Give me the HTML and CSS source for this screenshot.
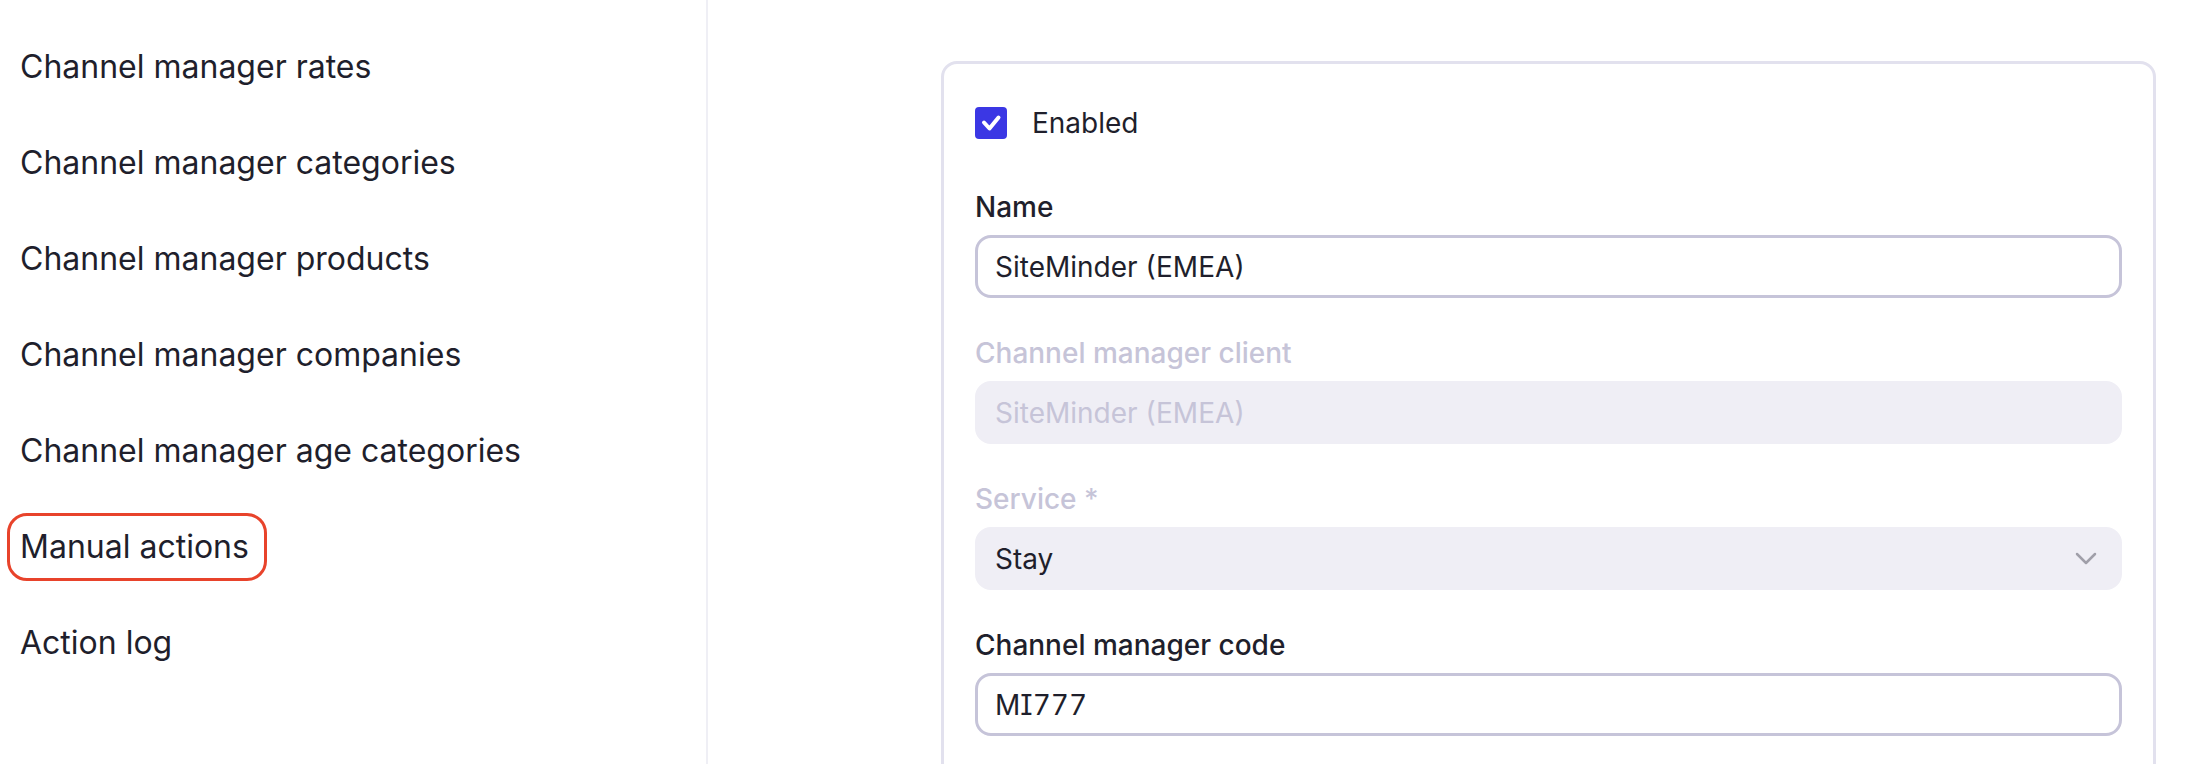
FILE: index.html
```html
<!DOCTYPE html>
<html lang="en">
<head>
    <meta charset="UTF-8">
    <meta name="viewport" content="width=device-width, initial-scale=1.0">
    <title>Channel manager</title>
    <link rel="stylesheet" href="styles.css">
</head>
<body>
    <nav class="sidebar">
        <a class="nav-item" href="#">Channel manager rates</a>
        <a class="nav-item" href="#">Channel manager categories</a>
        <a class="nav-item" href="#">Channel manager products</a>
        <a class="nav-item" href="#">Channel manager companies</a>
        <a class="nav-item" href="#">Channel manager age categories</a>
        <a class="nav-item selected" href="#">Manual actions</a>
        <a class="nav-item" href="#">Action log</a>
    </nav>
    <main class="main">
        <form class="card">
            <label class="check-row">
                <span class="checkbox">
                    <svg width="32" height="32" viewBox="0 0 32 32">
                        <path d="M9 15.5 L14.5 21.5 L23.5 10.5" fill="none" stroke="#fff" stroke-width="4" stroke-linecap="round" stroke-linejoin="round"/>
                    </svg>
                </span>
                Enabled
            </label>
            <div class="field">
                <div class="field-label">Name</div>
                <div class="input">SiteMinder (EMEA)</div>
            </div>
            <div class="field disabled">
                <div class="field-label">Channel manager client</div>
                <div class="input">SiteMinder (EMEA)</div>
            </div>
            <div class="field select">
                <div class="field-label">Service *</div>
                <div class="input">
                    Stay
                    <svg class="chevron" width="22" height="13" viewBox="0 0 22 13">
                        <path d="M2 2 L11 11 L20 2" fill="none" stroke="#a09fa9" stroke-width="2.5" stroke-linecap="round" stroke-linejoin="round"/>
                    </svg>
                </div>
            </div>
            <div class="field">
                <div class="field-label">Channel manager code</div>
                <div class="input">MI777</div>
            </div>
        </form>
    </main>
</body>
</html>
```

FILE: styles.css
```css
* {
    box-sizing: border-box;
}
body {
    margin: 0;
    height: 100vh;
    overflow: hidden;
    display: flex;
    background-color: #fff;
    color: #1f1f2c;
    font-family: Inter, "Noto Sans", sans-serif;
}
.sidebar {
    width: 708px;
    flex-shrink: 0;
    border-right: 2px solid #efeff5;
    padding: 33px 0 0 7px;
    display: flex;
    flex-direction: column;
    align-items: flex-start;
}
.nav-item {
    color: #1f1f2c;
    text-decoration: none;
    font-size: 32px;
    line-height: 48px;
    padding: 7px 15px 7px 10px;
    border: 3px solid transparent;
    border-radius: 20px;
    margin-bottom: 28px;
}
.nav-item.selected {
    border-color: #e8432b;
}
.main {
    flex-grow: 1;
    padding: 61px 34px 0 233px;
}
.card {
    border: 3px solid #e2e1ee;
    border-radius: 16px;
    padding: 35px 31px 40px;
}
.check-row {
    display: flex;
    align-items: center;
    gap: 25px;
    height: 48px;
    font-size: 28px;
    margin-bottom: 40px;
}
.checkbox {
    width: 32px;
    height: 32px;
    border-radius: 4px;
    background-color: #3b37e4;
    display: flex;
}
.field {
    margin-bottom: 35px;
}
.field-label {
    font-size: 28px;
    font-weight: 500;
    line-height: 40px;
    margin-bottom: 8px;
}
.input {
    height: 63px;
    border: 3px solid #c6c4d9;
    border-radius: 16px;
    padding: 0 17px;
    font-size: 28px;
    font-feature-settings: "cv08", "tnum";
    display: flex;
    align-items: center;
    justify-content: space-between;
}
.disabled .field-label {
    color: #c6c4d8;
}
.disabled .input {
    border-color: #efeef5;
    background-color: #efeef5;
    color: #c6c4d8;
}
.select .field-label {
    color: #c6c4d8;
}
.select .input {
    border-color: #efeef5;
    background-color: #efeef5;
}
.chevron {
    margin-right: 5px;
}
```
